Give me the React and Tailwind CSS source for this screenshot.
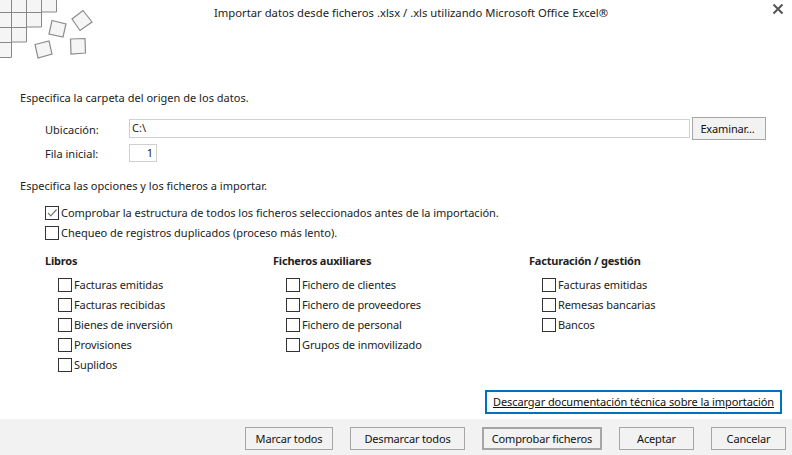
const Box = ({ checked }) => (
  <span className="w-[14px] h-[14px] border border-[#333] bg-white shrink-0 flex items-center justify-center">
    {checked && (
      <svg width="12" height="12" viewBox="0 0 12 12" fill="none">
        <path d="M2 6 L4.8 8.8 L10.5 2.5" stroke="#777" strokeWidth="1.2" />
      </svg>
    )}
  </span>
);

const Check = ({ label, checked, tight }) => (
  <label className={`flex items-center gap-[2px] h-[20px] whitespace-nowrap ${tight ? "tracking-[-0.1px]" : "tracking-[-0.02px]"}`}>
    <Box checked={checked} />
    <span>{label}</span>
  </label>
);

const Column = ({ title, items, className }) => (
  <div className={className}>
    <div className="font-bold h-[20px] flex items-center tracking-[-0.2px]">{title}</div>
    <div className="mt-[4px] ml-[13px] flex flex-col">
      {items.map((i) => (
        <Check key={i} label={i} tight />
      ))}
    </div>
  </div>
);

const Btn = ({ children, className }) => (
  <button className={`h-[23px] border border-[#a6a6a6] text-[#111] bg-[#f2f2f2] flex items-center justify-center whitespace-nowrap tracking-[-0.15px] ${className}`}>
    {children}
  </button>
);

export default function App() {
  return (
    <div className="w-[792px] h-[455px] bg-white flex flex-col overflow-hidden text-[11px] text-[#222] font-['Noto_Sans','Open_Sans',sans-serif] tracking-[0.02px] leading-[14px]">
      <header className="h-[88px] shrink-0 flex items-start">
        <svg width="100" height="60" viewBox="0 0 100 60" className="shrink-0">
          <g fill="#f5f5f5" stroke="#888" strokeWidth="1">
            <path d="M-2 -2H56.5V12H41.5V27H26.5V42H11.5V57.5H-2Z" />
            <path d="M11.5 -2V42M26.5 -2V27M41.5 -2V12M-2 12.5H41M-2 27.5H26M-2 42.5H11" fill="none" />
            <g strokeWidth="1.2" stroke="#8c8c8c">
              <polygon points="52,20.5 66,24 63,37 49,34" />
              <polygon points="83,10.5 92,22 80,30.5 72,19" />
              <polygon points="35,44.5 49,41 52,54 38,58" />
              <polygon points="70.5,39 85,38.5 85.5,53 71,54" />
            </g>
          </g>
        </svg>
        <h1 className="ml-[114px] mt-[5px] text-[11.25px] leading-[16px] font-normal tracking-[0] text-[#222] whitespace-nowrap">
          Importar datos desde ficheros .xlsx / .xls utilizando Microsoft Office Excel®
        </h1>
        <svg width="12" height="12" viewBox="0 0 12 12" className="ml-auto mr-[8px] mt-[3px]">
          <path d="M1.5 1.5 L10.5 10.5 M10.5 1.5 L1.5 10.5" stroke="#555" strokeWidth="2" />
        </svg>
      </header>

      <main className="flex-1 flex flex-col pl-[20px]">
        <p className="h-[20px] flex items-center">Especifica la carpeta del origen de los datos.</p>

        <div className="mt-[9px] ml-[25px] flex items-center h-[23px]">
          <span className="w-[84px] pt-[2px]">Ubicación:</span>
          <div className="w-[561px] h-[19px] border border-[#d0d0d0] px-[2px] pb-[2px] flex items-center">C:\</div>
          <Btn className="ml-[2px] w-[74px] pr-[3px]">Examinar...</Btn>
        </div>

        <div className="mt-[4px] ml-[25px] flex items-center h-[18px]">
          <span className="w-[84px] pt-[2px]">Fila inicial:</span>
          <div className="w-[28px] h-[18px] border border-[#d0d0d0] px-[3px] flex items-center justify-end">1</div>
        </div>

        <p className="mt-[14px] h-[20px] flex items-center">Especifica las opciones y los ficheros a importar.</p>

        <div className="mt-[7px] ml-[25px] flex flex-col">
          <Check checked label="Comprobar la estructura de todos los ficheros seleccionados antes de la importación." />
          <Check label="Chequeo de registros duplicados (proceso más lento)." />
        </div>

        <div className="mt-[8px] ml-[25px] flex">
          <Column className="w-[228px]" title="Libros" items={["Facturas emitidas", "Facturas recibidas", "Bienes de inversión", "Provisiones", "Suplidos"]} />
          <Column className="w-[256px]" title="Ficheros auxiliares" items={["Fichero de clientes", "Fichero de proveedores", "Fichero de personal", "Grupos de inmovilizado"]} />
          <Column title="Facturación / gestión" items={["Facturas emitidas", "Remesas bancarias", "Bancos"]} />
        </div>
      </main>

      <div className="h-[24px] shrink-0 mb-[5px] flex justify-end pr-[10px]">
        <a className="w-[297px] h-[24px] border-2 border-[#0070c0] flex items-center justify-center underline text-[#111] whitespace-nowrap tracking-[-0.08px]">
          Descargar documentación técnica sobre la importación
        </a>
      </div>

      <footer className="h-[36px] shrink-0 bg-[#f2f2f2] flex items-start pt-[8px] pl-[245px]">
        <Btn className="w-[88px]">Marcar todos</Btn>
        <Btn className="w-[115px] ml-[17px]">Desmarcar todos</Btn>
        <Btn className="w-[120px] ml-[17px] border-2">Comprobar ficheros</Btn>
        <Btn className="w-[75px] ml-[17px]">Aceptar</Btn>
        <Btn className="w-[75px] ml-[17px]">Cancelar</Btn>
      </footer>
    </div>
  );
}
